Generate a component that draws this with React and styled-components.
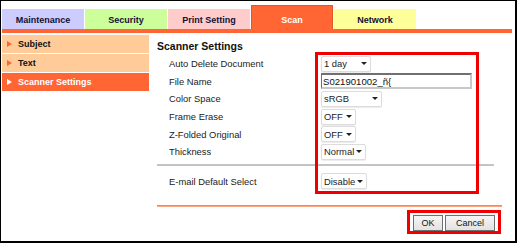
import React from 'react';
import styled, { createGlobalStyle } from 'styled-components';

const GlobalStyle = createGlobalStyle`
  body {
    margin: 0;
    background: #fff;
    font-family: "Liberation Sans", Arial, sans-serif;
  }
`;

const tabs = [
  { label: 'Maintenance', bg: '#ccccff' },
  { label: 'Security', bg: '#ccff99' },
  { label: 'Print Setting', bg: '#ffcccc' },
  { label: 'Scan', bg: '#ff6633', active: true },
  { label: 'Network', bg: '#ffff99' },
];

const menu = [
  { label: 'Subject' },
  { label: 'Text' },
  { label: 'Scanner Settings', active: true },
];

const fields = [
  { label: 'Auto Delete Document', value: '1 day', width: 50 },
  { label: 'File Name', value: 'S021901002_ñ{', width: 151, input: true },
  { label: 'Color Space', value: 'sRGB', width: 61 },
  { label: 'Frame Erase', value: 'OFF', width: 35 },
  { label: 'Z-Folded Original', value: 'OFF', width: 35 },
  { label: 'Thickness', value: 'Normal', width: 45 },
];

const Field = ({ field }) => (
  <>
    <Label>{field.label}</Label>
    <div>
      {field.input ? (
        <TextBox $width={field.width}>{field.value}</TextBox>
      ) : (
        <Select $width={field.width}>
          {field.value}
          <Caret />
        </Select>
      )}
    </div>
  </>
);

const App = () => {
  return (
    <Frame>
      <GlobalStyle />
      <TabBar>
        {tabs.map((tab) => (
          <Tab key={tab.label} $bg={tab.bg} $active={tab.active}>
            {tab.label}
          </Tab>
        ))}
      </TabBar>
      <TopRule />

      <Body>
        <Sidebar>
          {menu.map((item) => (
            <MenuItem key={item.label} $active={item.active}>
              <Arrow $active={item.active} />
              {item.label}
            </MenuItem>
          ))}
        </Sidebar>

        <Content>
          <Title>Scanner Settings</Title>
          <FieldGrid>
            {fields.map((f) => (
              <Field key={f.label} field={f} />
            ))}
          </FieldGrid>
          <Divider />
          <FieldGrid>
            <Field field={{ label: 'E-mail Default Select', value: 'Disable', width: 46 }} />
          </FieldGrid>
          <FooterRule />
          <ButtonBar>
            <ButtonGroup>
              <Button $width={30}>OK</Button>
              <Button $width={50}>Cancel</Button>
            </ButtonGroup>
          </ButtonBar>
          <Highlight />
        </Content>
      </Body>
    </Frame>
  );
};

export default App;

const Frame = styled.div`
  width: 517px;
  height: 243px;
  box-sizing: border-box;
  border-style: solid;
  border-color: #000;
  border-width: 1px 2px 2px 1px;
  padding: 0 3px 0 1px;
  overflow: hidden;
`;

const TabBar = styled.div`
  display: flex;
  align-items: flex-end;
  gap: 1px;
  height: 28px;
`;

const Tab = styled.div`
  width: 82px;
  height: ${(p) => (p.$active ? 24 : 20)}px;
  box-sizing: border-box;
  display: flex;
  align-items: center;
  justify-content: center;
  background: ${(p) => p.$bg};
  border: 1px solid ${(p) => (p.$active ? '#e4552a' : 'transparent')};
  border-bottom: none;
  color: ${(p) => (p.$active ? '#fff' : '#111133')};
  font-size: 9px;
  font-weight: bold;
  padding-top: ${(p) => (p.$active ? 4 : 0)}px;
`;

const TopRule = styled.div`
  height: 4px;
  background: #ff6633;
`;

const Body = styled.div`
  display: flex;
  margin-top: 2px;
`;

const Sidebar = styled.div`
  width: 147px;
  display: flex;
  flex-direction: column;
  gap: 1px;
`;

const MenuItem = styled.div`
  height: 18px;
  display: flex;
  align-items: center;
  gap: 6px;
  padding-left: 5px;
  background: ${(p) => (p.$active ? '#ff6633' : '#ffcc99')};
  color: ${(p) => (p.$active ? '#fff' : '#111')};
  font-size: 9px;
  font-weight: bold;
`;

const Arrow = styled.span`
  width: 0;
  height: 0;
  border-left: 5px solid ${(p) => (p.$active ? '#fff' : '#ff6633')};
  border-top: 3px solid transparent;
  border-bottom: 3px solid transparent;
`;

const Content = styled.div`
  position: relative;
  flex: 1;
  padding-left: 8px;
`;

const Title = styled.div`
  padding-top: 2px;
  line-height: 18px;
  font-size: 10.5px;
  font-weight: bold;
  color: #111;
`;

const FieldGrid = styled.div`
  display: grid;
  grid-template-columns: 164px auto;
  grid-auto-rows: 17.6px;
  align-items: center;
`;

const Label = styled.div`
  padding-left: 12px;
  font-size: 9.4px;
  color: #222;
`;

const Select = styled.div`
  width: ${(p) => p.$width}px;
  height: 16px;
  box-sizing: border-box;
  display: flex;
  align-items: center;
  justify-content: space-between;
  padding: 0 3px 0 2px;
  background: #fff;
  border: 1px solid #dcdcdc;
  border-radius: 2px;
  box-shadow: 0 1px 1px rgba(0, 0, 0, 0.08);
  font-size: 9.4px;
  color: #222;
`;

const Caret = styled.span`
  width: 0;
  height: 0;
  border-top: 3px solid #222;
  border-left: 3px solid transparent;
  border-right: 3px solid transparent;
`;

const TextBox = styled.div`
  width: ${(p) => p.$width}px;
  height: 16px;
  box-sizing: border-box;
  display: flex;
  align-items: center;
  padding-left: 1px;
  background: #fff;
  border-style: solid;
  border-width: 2px 2px 2px 1px;
  border-color: #707070 #c8c8c8 #c8c8c8 #707070;
  font-size: 9.6px;
  color: #111;
`;

const Divider = styled.div`
  width: 337px;
  height: 2px;
  margin: 3px 0 7px;
  background: #c4c4c4;
`;

const FooterRule = styled.div`
  width: 345px;
  height: 2px;
  margin-top: 14.6px;
  background: linear-gradient(#ff7744, #ffb090);
`;

const ButtonBar = styled.div`
  width: 345px;
  display: flex;
  justify-content: flex-end;
  padding-right: 1px;
  box-sizing: border-box;
  margin-top: 3px;
`;

const ButtonGroup = styled.div`
  display: flex;
  gap: 2px;
  padding: 2px 3px 0 3px;
  border: 3px solid #ee0000;
`;

const Button = styled.div`
  width: ${(p) => p.$width}px;
  height: 16px;
  box-sizing: border-box;
  display: flex;
  align-items: center;
  justify-content: center;
  background: linear-gradient(#f6f6f6, #e2e2e2);
  border: 1px solid #707070;
  font-size: 9px;
  color: #111;
`;

const Highlight = styled.div`
  position: absolute;
  left: 166px;
  top: 17px;
  width: 164px;
  height: 142px;
  box-sizing: border-box;
  border: 3px solid #ee0000;
  pointer-events: none;
`;
